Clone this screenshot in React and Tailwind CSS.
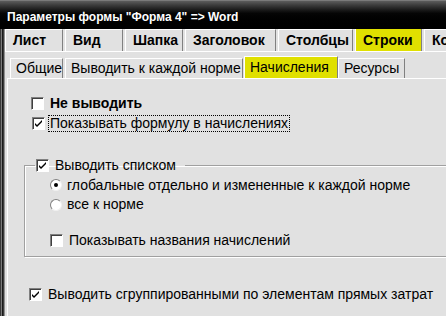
import React from "react";

function CheckBox({ checked }) {
  return (
    <span className="relative block w-[13px] h-[13px] shrink-0 border border-t-[#808080] border-l-[#808080] border-r-white border-b-white bg-white shadow-[inset_1px_1px_0_#404040]">
      {checked && (
        <svg className="absolute left-[1px] top-[1px]" width="9" height="9" viewBox="0 0 9 9">
          <path d="M1 4 L3 6 L8 1 L8 3 L3 8 L1 6 Z" fill="#000" />
        </svg>
      )}
    </span>
  );
}

function Radio({ checked }) {
  return (
    <span className="relative flex items-center justify-center w-[12px] h-[12px] shrink-0 rounded-full bg-white border border-t-[#808080] border-l-[#808080] border-r-[#f0f0f0] border-b-[#f0f0f0]">
      {checked && <span className="block w-[4px] h-[4px] rounded-full bg-black" />}
    </span>
  );
}

function OuterTab({ label, w, selected }) {
  return (
    <div
      className={
        "shrink-0 flex items-center pl-[7px] text-[14px] font-bold text-black border-t border-l border-white border-r border-r-[#808080] overflow-hidden " +
        (selected ? "h-[23px] bg-[#e0e000]" : "h-[22px] bg-[#e1e1e1]")
      }
      style={{ width: w }}
    >
      <span className="whitespace-nowrap">{label}</span>
    </div>
  );
}

function InnerTab({ label, w, selected }) {
  return (
    <div
      className={
        "shrink-0 flex items-center pl-[5px] text-[14px] text-black border-t border-l border-white border-r border-r-[#808080] " +
        (selected ? "h-[22px] bg-[#e0e000]" : "h-[20px] bg-[#e1e1e1]")
      }
      style={{ width: w }}
    >
      <span className="whitespace-nowrap">{label}</span>
    </div>
  );
}

export default function App() {
  return (
    <div className="w-[446px] h-[316px] overflow-hidden flex flex-col bg-[#e1e1e1] font-['Liberation_Sans',Arial,sans-serif] text-black">
      {/* title bar */}
      <div className="h-[29px] shrink-0 flex items-center pl-[7px] pt-[3px] border-t border-[#7a7a7a] bg-linear-to-b from-[#5c5c5c] via-[#050505] via-45% to-black">
        <span className="text-white font-bold text-[12px] whitespace-nowrap">
          Параметры формы "Форма 4" =&gt; Word
        </span>
      </div>
      <div className="flex-1 flex min-h-0">
        {/* left window frame */}
        <div className="w-[5px] shrink-0 flex">
          <div className="w-[1px] bg-[#3a3a3a]" />
          <div className="w-[1px] bg-[#7a7a7a]" />
          <div className="w-[1px] bg-[#1a1a1a]" />
          <div className="w-[1px] bg-[#3c3c3c]" />
          <div className="w-[1px] bg-[#909090]" />
        </div>
        <div className="flex-1 flex flex-col min-w-0 overflow-hidden">
          {/* outer tabs */}
          <div className="h-[23px] shrink-0 flex items-end gap-[2px] border-b border-white">
            <OuterTab label="Лист" w={58} />
            <OuterTab label="Вид" w={58} />
            <OuterTab label="Шапка" w={58} />
            <OuterTab label="Заголовок" w={91} />
            <OuterTab label="Столбцы" w={75} />
            <OuterTab label="Строки" w={67} selected />
            <OuterTab label="Ко" w={40} />
          </div>
          {/* inner tabs */}
          <div className="h-[26px] shrink-0 flex items-end ml-[5px]">
            <div className="flex items-end gap-[2px]">
              <InnerTab label="Общие" w={53} />
              <InnerTab label="Выводить к каждой норме" w={178} />
            </div>
            <div className="flex items-end ml-[1px]">
              <InnerTab label="Начисления" w={94} selected />
              <InnerTab label="Ресурсы" w={67} />
            </div>
          </div>
          {/* inner panel */}
          <div className="flex-1 ml-[2px] border-t border-l border-white flex flex-col text-[14px]">
            <div className="h-[20px] mt-[14px] flex items-center ml-[23px] gap-[6px]">
              <CheckBox />
              <span className="font-bold text-[14px] whitespace-nowrap">Не выводить</span>
            </div>
            <div className="h-[20px] flex items-center ml-[24px] gap-[3px]">
              <CheckBox checked />
              <span className="px-px leading-[15px] border border-dotted border-black whitespace-nowrap">
                Показывать формулу в начислениях
              </span>
            </div>
            <fieldset className="mt-[22px] ml-[16px] w-[440px] border border-[#a0a0a0] shadow-[inset_1px_1px_0_#ffffff,1px_1px_0_#ffffff] pb-[6px]">
              <legend className="ml-[10px] pl-[1px] pr-[9px]">
                <div className="h-[20px] flex items-center gap-[6px]">
                  <CheckBox checked />
                  <span className="whitespace-nowrap">Выводить списком</span>
                </div>
              </legend>
              <div className="pl-[25px] flex flex-col">
                <div className="h-[20px] flex items-center gap-[5px]">
                  <Radio checked />
                  <span className="whitespace-nowrap">глобальные отдельно и измененные к каждой норме</span>
                </div>
                <div className="h-[19px] flex items-center gap-[5px]">
                  <Radio />
                  <span className="whitespace-nowrap">все к норме</span>
                </div>
                <div className="h-[20px] mt-[16px] flex items-center gap-[6px]">
                  <CheckBox />
                  <span className="whitespace-nowrap">Показывать названия начислений</span>
                </div>
              </div>
            </fieldset>
            <div className="h-[20px] mt-[27px] ml-[21px] flex items-center gap-[6px]">
              <CheckBox checked />
              <span className="whitespace-nowrap">Выводить сгруппированными по элементам прямых затрат</span>
            </div>
          </div>
        </div>
      </div>
    </div>
  );
}
